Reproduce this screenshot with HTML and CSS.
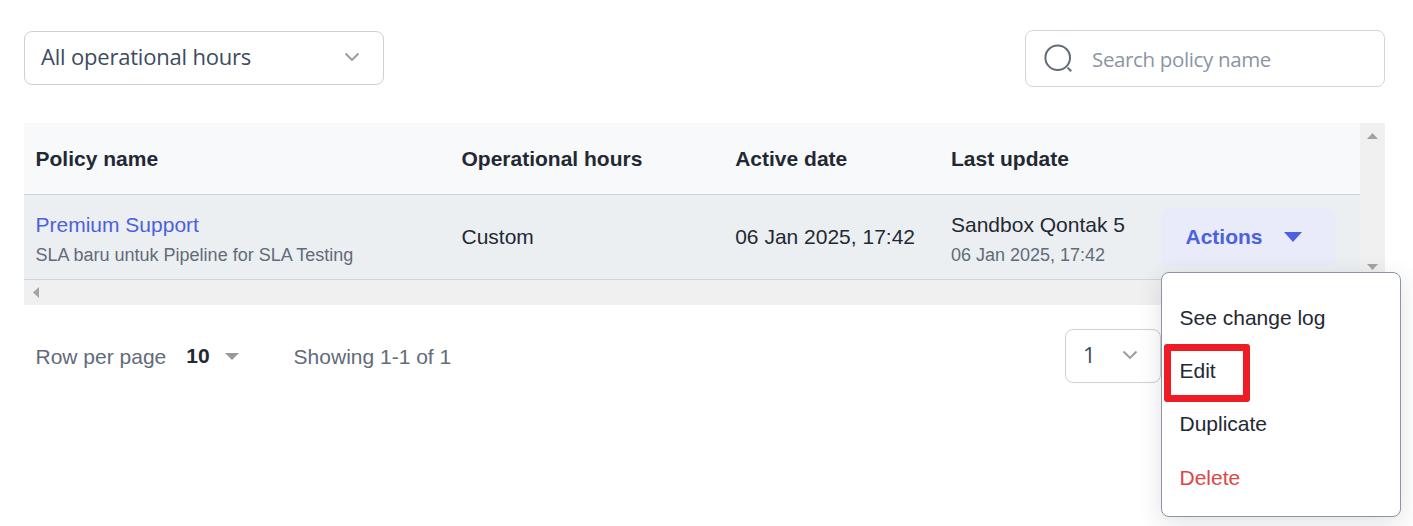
FILE: index.html
```html
<!DOCTYPE html>
<html lang="en">
<head>
<meta charset="utf-8">
<title>SLA policies</title>
<link rel="stylesheet" href="styles.css">
</head>
<body>
<main class="page">
  <div class="toolbar">
    <div class="select">
      <span class="select-label">All operational hours</span>
      <svg class="chevron" width="16" height="10" viewBox="0 0 16 10"><path d="M1.5 1.5 8 8l6.500-6.500"/></svg>
    </div>
    <div class="search">
      <svg class="search-icon" width="30" height="30" viewBox="0 0 30 30"><circle cx="13.700" cy="13.700" r="12.300"/><path d="m23.600 23.600 3.700 3.700"/></svg>
      <span class="search-label">Search policy name</span>
    </div>
  </div>

  <div class="table-box">
    <div class="table">
      <div class="row head">
        <div>Policy name</div>
        <div>Operational hours</div>
        <div>Active date</div>
        <div>Last update</div>
        <div></div>
      </div>
      <div class="row body">
        <div class="stack"><a class="link">Premium Support</a><small class="sub">SLA baru untuk Pipeline for SLA Testing</small></div>
        <div>Custom</div>
        <div>06 Jan 2025, 17:42</div>
        <div class="stack"><span>Sandbox Qontak 5</span><small class="sub">06 Jan 2025, 17:42</small></div>
        <div class="action-cell">
          <div class="actions">Actions<svg width="18" height="10" viewBox="0 0 18 10"><path d="M0 0h18L9 10z" fill="#4b61dd"/></svg></div>
        </div>
      </div>
    </div>
    <div class="vscroll">
      <svg width="11" height="6" viewBox="0 0 11 6"><path d="M0 6h11L5.500 0z" fill="#a3a3a3"/></svg>
      <svg width="11" height="6" viewBox="0 0 11 6"><path d="M0 0h11L5.500 6z" fill="#a3a3a3"/></svg>
    </div>
    <div class="hscroll">
      <svg width="6" height="11" viewBox="0 0 6 11"><path d="M6 0v11L0 5.500z" fill="#a3a3a3"/></svg>
    </div>
  </div>

  <div class="footer">
    <span class="footer-text">Row per page</span>
    <b class="count">10</b>
    <svg class="caret" width="14" height="7" viewBox="0 0 14 7"><path d="M0 0h14L7 7z" fill="#999"/></svg>
    <span class="footer-text showing">Showing 1-1 of 1</span>
    <div class="pager">
      <span class="page-number">1</span>
      <svg class="chevron" width="16" height="10" viewBox="0 0 16 10"><path d="M1.500 1.500 8 8l6.500-6.500"/></svg>
    </div>
  </div>

  <div class="menu">
    <div class="item">See change log</div>
    <div class="item">Edit</div>
    <div class="item">Duplicate</div>
    <div class="item danger">Delete</div>
  </div>
  <div class="highlight"></div>
</main>
</body>
</html>
```

FILE: styles.css
```css
* { box-sizing: border-box; }
body {
  margin: 0;
  background: #fff;
  color: #232933;
  font: 21px/30px "Liberation Sans", Arial, sans-serif;
}
svg { display: block; flex: none; }
.page {
  position: relative;
  width: 1413px;
  height: 526px;
  padding: 30px 28px 0 24px;
  overflow: hidden;
}
.toolbar { display: flex; justify-content: space-between; align-items: flex-start; height: 93px; }
.select {
  display: flex; align-items: center; justify-content: space-between;
  width: 360px; height: 54px; margin-top: 1px; padding: 0 23px 2px 16px;
  border: 1px solid #d0d0d0; border-radius: 8px;
}
.select-label, .page-number, .search-label { font-family: "Open Sans", "Noto Sans", sans-serif; }
.select-label { padding-bottom: 2px; font-size: 22px; letter-spacing: -0.2px; color: #3d4c60; }
.chevron { fill: none; stroke: #999; stroke-width: 1.8; }
.search {
  display: flex; align-items: center; gap: 18px;
  width: 360px; height: 57px; padding: 0 18px;
  border: 1px solid #d0d6dd; border-radius: 8px;
}
.search-icon { fill: none; stroke: #626b79; stroke-width: 2; }
.search-label { font-size: 20.500px; letter-spacing: -0.35px; color: #8b95a5; }

.table-box { display: grid; grid-template-columns: 1336px 25px; grid-template-rows: 157px 25px; width: 1361px; background: #f0f0f0; }
.row { display: grid; grid-template-columns: 426px 273.700px 215.800px 210.500px 210px; align-items: center; padding: 0; border-bottom: 1px solid #ced5dd; }
.row > div { padding-left: 11.500px; white-space: nowrap; }
.head { height: 72px; background: #f8f9fb; font-weight: 700; }
.body { height: 85px; background: #ebeff2; }
.row > .stack { display: flex; flex-direction: column; padding-top: 6px; }
.link { color: #4b61dd; }
.sub { font-size: 18px; color: #626b79; }
.row > .action-cell { padding-left: 11px; }
.actions {
  display: flex; align-items: center; gap: 21.500px;
  width: 175px; height: 57px; padding-left: 24.500px;
  border-radius: 8px; background: #e9ebfb; color: #4b61dd; font-weight: 700;
}
.vscroll { display: flex; flex-direction: column; justify-content: space-between; align-items: center; padding: 10px 0 10px; }
.hscroll { display: flex; align-items: center; padding-left: 9px; }

.footer { display: flex; align-items: center; height: 54px; margin-top: 24px; padding-left: 11.500px; color: #626b79; }
.footer-text { padding-top: 2px; }
.count { margin-left: 20px; color: #232933; }
.caret { margin-left: 15px; }
.showing { margin-left: 55px; }
.pager {
  display: flex; align-items: center; justify-content: space-between;
  width: 96px; height: 54px; margin-left: auto; margin-right: 224px; padding: 0 22px 2px 17px;
  border: 1px solid #d0d0d0; border-radius: 8px;
}
.page-number { padding-bottom: 2px; font-size: 22px; color: #3d4c60; }

.menu {
  position: absolute; left: 1161px; top: 272px;
  width: 240px; height: 245px; padding: 18px 17.500px;
  border: 1px solid #8b95a5; border-radius: 8px; background: #fff;
  box-shadow: 0 6px 24px rgba(35, 41, 51, 0.14);
}
.item { height: 53.200px; line-height: 53.200px; }
.danger { color: #dc4645; }
.highlight {
  position: absolute; left: 1164px; top: 344px;
  width: 86px; height: 58px; border: 7px solid #ee1c25; border-radius: 3px;
}
```
